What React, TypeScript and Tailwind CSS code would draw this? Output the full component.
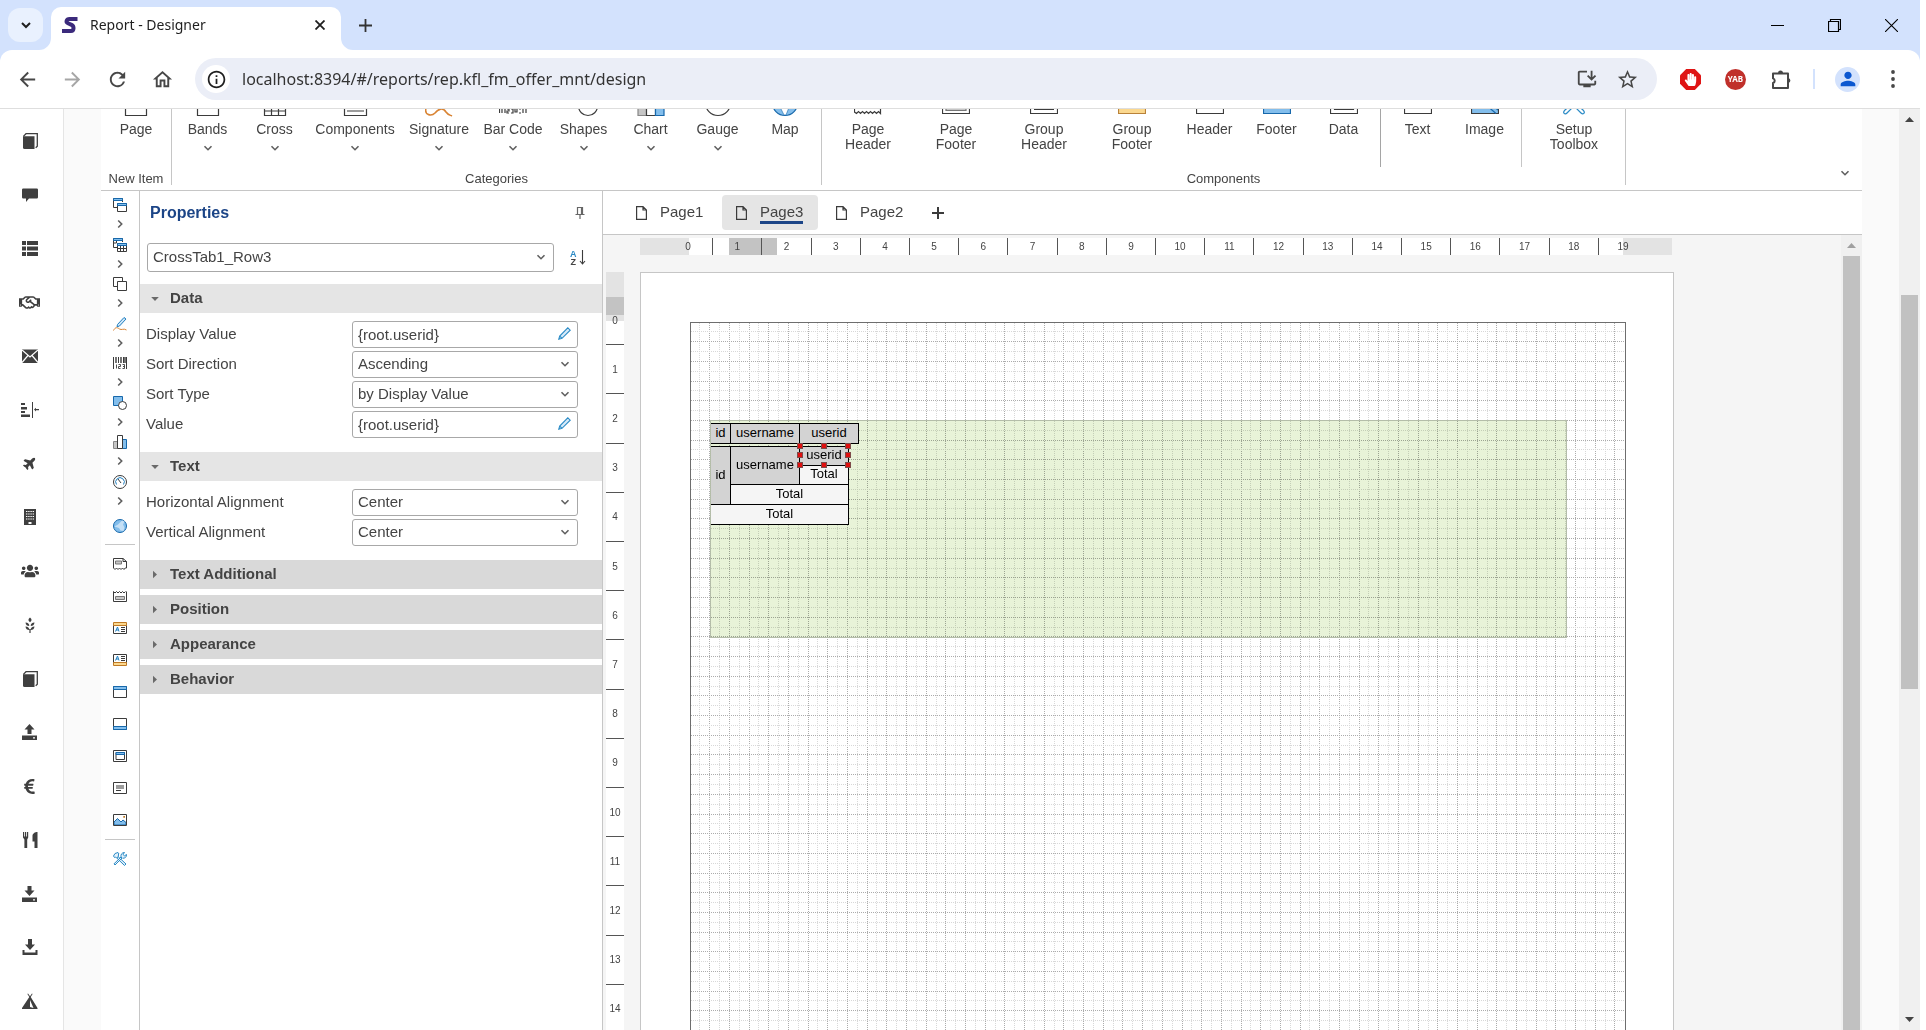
import { useState } from 'react';
import type { ReactNode } from 'react';
import { clsx } from 'clsx';
import { FaEuroSign, FaHandPaper, FaPlane, FaRegHandshake, FaUsers } from 'react-icons/fa';
import { MdInstallDesktop, MdStarBorder, MdPerson, MdRefresh, MdArrowBack, MdArrowForward, MdOutlineHome, MdInfoOutline } from 'react-icons/md';

const CM = 49.2;
const DARK = '#3b3b3b';

/* ---------- small shared glyphs ---------- */

function Chevron({ dir = 'down', className = '' }: { dir?: 'down' | 'right'; className?: string }) {
  return (
    <svg width="10" height="10" viewBox="0 0 10 10" fill="none" stroke="#5f5f5f" strokeWidth="1.6" className={className}>
      {dir === 'down' ? <path d="M1.5 3.2 5 6.7 8.5 3.2" /> : <path d="M3.2 1.5 6.7 5 3.2 8.5" />}
    </svg>
  );
}

function Glyph({ children, size = 16 }: { children: ReactNode; size?: number }) {
  return (
    <svg width={size} height={size} viewBox="0 0 16 16" fill="#3f3f3f">
      {children}
    </svg>
  );
}

/* ---------- app side menu ---------- */

const bookIcon = (
  <Glyph>
    <path d="M1 3.2h11.5V16H2.6A1.6 1.6 0 0 1 1 14.4z" />
    <path d="M1.4 3.4 4 .7h11.3v12.6l-1.6 1.5" fill="none" stroke="#3f3f3f" strokeWidth="1.3" />
  </Glyph>
);

const sideItems: { label: string; icon: ReactNode }[] = [
  { label: 'Catalog', icon: bookIcon },
  {
    label: 'Messages',
    icon: (
      <Glyph>
        <path d="M1.2 1.5h13.6A1.2 1.2 0 0 1 16 2.7v7.6a1.2 1.2 0 0 1-1.2 1.2H7L4 15v-3.5H1.2A1.2 1.2 0 0 1 0 10.3V2.7A1.2 1.2 0 0 1 1.2 1.5z" />
      </Glyph>
    ),
  },
  {
    label: 'Lists',
    icon: (
      <Glyph>
        <path d="M0 1h4v4H0zM5 1h11v4H5zM0 6.500h4v4H0zM5 6.500h11v4H5zM0 12h4v4H0zM5 12h11v4H5z" />
      </Glyph>
    ),
  },
  { label: 'Partners', icon: <FaRegHandshake size={21} color="#3f3f3f" /> },
  {
    label: 'Mail',
    icon: (
      <Glyph>
        <path d="M0 1.500h16v13.500H0z" />
        <path d="m0 2 8 7 8-7M0 14.500 6 7.500M16 14.500l-6-7" fill="none" stroke="#fff" strokeWidth="1.2" />
      </Glyph>
    ),
  },
  {
    label: 'Planning',
    icon: (
      <svg width="18" height="16" viewBox="0 0 18 16" fill="#3f3f3f">
        <path d="M0 1h4v2H0zM0 5h6v2.500H0zM0 9h4v2H0zM0 12.500h9V15H0zM11 0h1v16h-1zM13.500 7H18v1.200h-4.500zM13 7.600l2-1.800v3.600z" />
      </svg>
    ),
  },
  { label: 'Travel', icon: <FaPlane size={14} color="#3f3f3f" className="-rotate-45" /> },
  {
    label: 'Buildings',
    icon: (
      <Glyph>
        <path d="M2 0h12v16H2z" />
        <path d="M4 2.500h8M4 5h8M4 7.500h8M4 10h8" stroke="#fff" strokeWidth="1.2" strokeDasharray="1.400 .8" />
        <path d="M6.500 13h3v2h-3z" fill="#fff" />
      </Glyph>
    ),
  },
  { label: 'Teams', icon: <FaUsers size={18} color="#3f3f3f" /> },
  {
    label: 'Crops',
    icon: (
      <Glyph>
        <path d="M8 .5c2.100 1.600 2.100 3.200 0 4.800-2.100-1.600-2.100-3.200 0-4.800zM7.300 9C5.200 8.900 3.700 7.800 3.500 5.400 6 5.600 7.300 6.700 7.300 9zM8.700 9c2.100-.1 3.600-1.200 3.800-3.600C10 5.600 8.700 6.700 8.700 9zM7.300 13C5.200 12.900 3.700 11.800 3.500 9.400c2.500.2 3.800 1.300 3.800 3.600zM8.700 13c2.100-.1 3.600-1.200 3.800-3.600-2.500.2-3.800 1.300-3.800 3.600zM7.400 12h1.200v4H7.400z" />
      </Glyph>
    ),
  },
  { label: 'Ledger', icon: bookIcon },
  {
    label: 'Export',
    icon: (
      <Glyph>
        <path d="m7.500 0 5 5.500H9.500V10h-4V5.500h-3zM0 11.500h15V16H0z" />
        <path d="M11 13.200h2v1.200h-2z" fill="#fff" />
      </Glyph>
    ),
  },
  { label: 'Currency', icon: <FaEuroSign size={17} color="#3f3f3f" /> },
  {
    label: 'Restaurant',
    icon: (
      <Glyph>
        <path d="M1 0h1.200v4.500H3V0h1.200v4.500H5V0h1.200v5.500L5.200 7.500V16H2.400V7.500L1 5.500zM15.500 0v16h-3V9.500h-2V4c0-2.500 2.500-4 5-4z" />
      </Glyph>
    ),
  },
  {
    label: 'Save',
    icon: (
      <Glyph>
        <path d="M5.500 0h4v4.500h3l-5 5.500-5-5.500h3zM0 11.500h15V16H0z" />
        <path d="M11 13.200h2v1.200h-2z" fill="#fff" />
      </Glyph>
    ),
  },
  {
    label: 'Download',
    icon: (
      <Glyph>
        <path d="M6 0h4v5.500h3L8 11 3 5.500h3zM.500 11H2.500v2.500h11V11h2v5H.500z" />
      </Glyph>
    ),
  },
  {
    label: 'Camp',
    icon: (
      <Glyph>
        <path d="M6 .5 8 3.200 10 .5l.6.5-1.900 3L15.500 15v1H0v-1L7.300 4 5.400 1zM8 7v7l3.500 1z" fillRule="evenodd" />
      </Glyph>
    ),
  },
];

/* ---------- ribbon ---------- */

function BigIcon({ children }: { children: ReactNode }) {
  return (
    <svg width="28" height="28" viewBox="0 0 28 28" fill="none" stroke={DARK} strokeWidth="1.2" className="shrink-0">
      {children}
    </svg>
  );
}

interface RibbonItem {
  label: string;
  width: string;
  menu?: boolean;
  icon: ReactNode;
}

const categories: RibbonItem[] = [
  { label: 'Bands', width: 'w-[67px]', menu: true, icon: <path d="M3.500 1.500h21v25h-21zM3.500 8h21" /> },
  { label: 'Cross', width: 'w-[67px]', menu: true, icon: <path d="M3.500 1.500h21v25h-21zM3.500 8h21M3.500 15h21M3.500 22h21M10.500 8v18.500M17.500 8v18.500" /> },
  { label: 'Components', width: 'w-[94px]', menu: true, icon: <path d="M3.500 1.500h22v25h-22zM6 18h17M6 22h17" /> },
  { label: 'Signature', width: 'w-[74px]', menu: true, icon: <path d="M1 19c-2 8 6 8 9 5 3-4 8-6 11-1 2 3 4 3 6 4" stroke="#d98434" strokeWidth="1.6" /> },
  {
    label: 'Bar Code',
    width: 'w-[74px]',
    menu: true,
    icon: (
      <path d="M.500 2v22M3 2v22M6 2v16M9 2v16M12 2v16M16 2v16M20 2v16M24 2v22M27 2v22M6 20v4M8 20h2v2H8v2h2M12 20h2v4h-2M16 20v3h2v-3M20 20h2M20 24h2" />
    ),
  },
  { label: 'Shapes', width: 'w-[67px]', menu: true, icon: <circle cx="18" cy="17" r="9.500" /> },
  {
    label: 'Chart',
    width: 'w-[67px]',
    menu: true,
    icon: (
      <>
        <path d="M1 14h8.500v12.500H1z" fill="#c6c6c6" stroke="#888" />
        <path d="M9.500 3h9v23.500h-9z" fill="#fff" />
        <path d="M18.500 9H27v17.500h-8.500z" fill="#83beec" stroke="#1768ab" />
      </>
    ),
  },
  { label: 'Gauge', width: 'w-[67px]', menu: true, icon: <circle cx="14" cy="14" r="12.500" /> },
  {
    label: 'Map',
    width: 'w-[68px]',
    icon: (
      <>
        <circle cx="14" cy="14" r="12.500" fill="#83beec" stroke="#1768ab" />
        <path d="M8 16h11l-4 10h-2z" fill="#fff" stroke="#1768ab" strokeWidth=".6" />
      </>
    ),
  },
];

const bandItems: RibbonItem[] = [
  { label: 'Page Header', width: 'w-[88px]', icon: <path d="M.500 2v21l2 1.500 2-2 2 2 2-2 2 2 2-2 2 2 2-2 2 2 2-2 2 2 2-2 2 2V2z" /> },
  {
    label: 'Page Footer',
    width: 'w-[88px]',
    icon: (
      <>
        <path d="M.500 2v22.500h27V2" />
        <path d="M4 14h20v7.500H4z" fill="#c6c6c6" stroke="#777" />
      </>
    ),
  },
  { label: 'Group Header', width: 'w-[88px]', icon: <path d="M.500 2v22.500h27V2zM4 16h20M4 20.500h20" /> },
  { label: 'Group Footer', width: 'w-[88px]', icon: <path d="M.500 13h27v11.500H.500z" fill="#fbd88f" stroke="#b98239" /> },
  { label: 'Header', width: 'w-[67px]', icon: <path d="M.500 2v22.500h27V2z" /> },
  { label: 'Footer', width: 'w-[67px]', icon: <path d="M.500 13h27v11.500H.500z" fill="#83beec" stroke="#1768ab" /> },
  { label: 'Data', width: 'w-[67px]', icon: <path d="M.500 2v22.500h27V2zM4.500 6v14.500h19V6z" /> },
];

const contentItems: RibbonItem[] = [
  { label: 'Text', width: 'w-[67px]', icon: <path d="M.500 2v22.500h27V2z" /> },
  {
    label: 'Image',
    width: 'w-[67px]',
    icon: (
      <>
        <path d="M.500 15h27v9.500H.500z" fill="#83beec" />
        <path d="M14 15l11 9.500M20 15l7 6" stroke="#1768ab" />
      </>
    ),
  },
];

const setupItem: RibbonItem = {
  label: 'Setup Toolbox',
  width: 'w-[98px]',
  icon: <path d="M12 15 5 21c-3 3 0 5 2 3l6-6M16 15l7 6c3 3 0 5-2 3l-6-6" stroke="#2b8bc6" />,
};

function RibbonButton({ item }: { item: RibbonItem }) {
  return (
    <button type="button" className={clsx('flex flex-col items-center', item.width)}>
      <BigIcon>{item.icon}</BigIcon>
      <span className={clsx('mt-[5px] text-sm leading-[15px]', item.menu ? 'whitespace-nowrap' : 'px-3')}>{item.label}</span>
      {item.menu && <Chevron className="mt-1.5" />}
    </button>
  );
}

function RibbonGroup({ title, children }: { title: string; children: ReactNode }) {
  return (
    <div className="flex h-24 flex-col border-r border-[#c6c6c6]">
      <div className="flex h-[78px] items-stretch px-[2px]">{children}</div>
      <div className="mt-auto text-center text-[13px] leading-3">{title}</div>
    </div>
  );
}

function Ribbon() {
  return (
    <div className="flex h-[102px] border-b border-[#c6c6c6]">
      <RibbonGroup title="New Item">
        <RibbonButton item={{ label: 'Page', width: 'w-[66px]', icon: <path d="M3.500 1.500v25h21V8l-6-6.500z" /> }} />
      </RibbonGroup>
      <RibbonGroup title="Categories">
        {categories.map((item) => (
          <RibbonButton key={item.label} item={item} />
        ))}
      </RibbonGroup>
      <RibbonGroup title="Components">
        {bandItems.map((item) => (
          <RibbonButton key={item.label} item={item} />
        ))}
        <span className="mx-[3px] w-px bg-[#a5a5a5]" />
        {contentItems.map((item) => (
          <RibbonButton key={item.label} item={item} />
        ))}
        <span className="mx-[3px] w-px bg-[#c6c6c6]" />
        <RibbonButton item={setupItem} />
      </RibbonGroup>
      <button type="button" aria-label="Collapse ribbon" className="mt-auto mr-3 mb-3 ml-auto">
        <Chevron />
      </button>
    </div>
  );
}

/* ---------- toolbox strip ---------- */

function ToolIcon({ children }: { children: ReactNode }) {
  return (
    <svg width="14" height="14" viewBox="0 0 14 14" fill="none" stroke={DARK} strokeWidth="1" className="shrink-0 overflow-visible">
      {children}
    </svg>
  );
}

const groupTools: { label: string; icon: ReactNode }[] = [
  {
    label: 'Bands',
    icon: (
      <>
        <path d="M4 9.500H.500v-9h9V4" />
        <path d="M.500.500h9v2h-9z" fill="#83beec" stroke="#1768ab" />
        <path d="M4.500 5.500h9v8h-9z" fill="#fff" />
        <path d="M4.500 5.500h9v2h-9z" fill="#83beec" stroke="#1768ab" />
      </>
    ),
  },
  {
    label: 'Cross',
    icon: (
      <>
        <path d="M.500 9.500V.500h9V4M.500 5h3M.500 9.500H4M3.500 3v2" />
        <path d="M.500.500h9v2h-9z" fill="#83beec" stroke="#1768ab" />
        <path d="M4.500 5.500h9v8h-9zM4.500 10.500h9M7.500 7v6.500M10.500 7v6.500" fill="#fff" />
        <path d="M4.500 5.500h9v2h-9z" fill="#83beec" stroke="#1768ab" />
      </>
    ),
  },
  { label: 'Components', icon: <path d="M4 9.500H.500v-9h9V4M4.500 4.500h9v9h-9z" /> },
  {
    label: 'Signature',
    icon: (
      <>
        <path d="M4.500 7.500 11 .500l2 1.500-6.500 7-2.500.800z" fill="#cfe6f8" stroke="#1f7fc0" />
        <path d="M.500 13.500c2-4 4-3 6-1.500s4-1 7 1" stroke="#d98434" />
      </>
    ),
  },
  {
    label: 'Bar Code',
    icon: (
      <>
        <path d="M.500 1v12M13.500 1v12M5.500 1v6M10.500 1v6" />
        <path d="M3 1v6M8 1v6M12 1v6" strokeWidth="1.400" />
        <path d="M3.500 8.500v4M5.500 8.500h2v2h-2v2h2M9.500 8.500h2v4h-2M10 10.500h1.500" strokeWidth=".9" />
      </>
    ),
  },
  {
    label: 'Shapes',
    icon: (
      <>
        <path d="M.500.500h9v9h-9z" fill="#83beec" stroke="#1768ab" />
        <circle cx="9.500" cy="9.500" r="4" fill="#fff" />
      </>
    ),
  },
  {
    label: 'Chart',
    icon: (
      <>
        <path d="M.500 6.500h4v7h-4z" fill="#c6c6c6" stroke="#888" />
        <path d="M9.500 4.500h4v9h-4z" fill="#83beec" stroke="#1768ab" />
        <path d="M4.500.500h5v13h-5z" fill="#fff" />
      </>
    ),
  },
  {
    label: 'Gauge',
    icon: (
      <>
        <circle cx="7" cy="7" r="6.500" />
        <path d="M3.500 9.500a4.300 4.300 0 1 1 7 0" stroke="#1f7fc0" />
        <path d="M8 8 5 4" />
      </>
    ),
  },
];

const bandTools: { label: string; icon: ReactNode }[] = [
  {
    label: 'Page Header',
    icon: (
      <>
        <path d="M.500 11V1.500h9.500l3.500 3V11M.500 11l1.500 1.500L3.500 11 5 12.500 6.500 11 8 12.500 9.500 11l1.500 1.500 1.200-1.500h1.300M10 1.500v3h3.500" />
        <path d="M2.500 4h6v3h-6z" fill="#c6c6c6" stroke="#777" />
      </>
    ),
  },
  {
    label: 'Page Footer',
    icon: (
      <>
        <path d="M.500 2.500v10h13v-10M.500 2.500 2 4l1.500-1.500L5 4l1.500-1.500L8 4l1.500-1.500L11 4l1.500-1.500" />
        <path d="M2.500 7.500h9v3h-9z" fill="#c6c6c6" stroke="#777" />
      </>
    ),
  },
  {
    label: 'Group Header',
    icon: (
      <>
        <path d="M.500 4v8.500h13V4M8 6.500h4M8 8.500h4M8 10.500h4" />
        <path d="M2.500 10.500 4.500 6l1.500 4.500M3 9h2.500" stroke="#1f7fc0" />
        <path d="M.500 1.500h13v3h-13z" fill="#fbd88f" stroke="#c07a24" />
      </>
    ),
  },
  {
    label: 'Group Footer',
    icon: (
      <>
        <path d="M.500 10V1.500h13V10M8 3.500h4M8 5.500h4M8 7.500h4" />
        <path d="M2.500 7.500 4.500 3 6 7.500M3 6h2.500" stroke="#1f7fc0" />
        <path d="M.500 9.500h13v3h-13z" fill="#fbd88f" stroke="#c07a24" />
      </>
    ),
  },
  {
    label: 'Header',
    icon: (
      <>
        <path d="M.500 1.500h13v11h-13z" />
        <path d="M.500 1.500h13v3h-13z" fill="#83beec" stroke="#1768ab" />
      </>
    ),
  },
  {
    label: 'Footer',
    icon: (
      <>
        <path d="M.500 1.500h13v11h-13z" />
        <path d="M.500 9.500h13v3h-13z" fill="#83beec" stroke="#1768ab" />
      </>
    ),
  },
  {
    label: 'Data',
    icon: (
      <>
        <path d="M.500 1.500h13v11h-13zM3 3.500h8.500v7H3z" />
        <path d="M3 3.500h8.500v2H3z" fill="#83beec" stroke="#1768ab" />
      </>
    ),
  },
  { label: 'Text', icon: <path d="M.500 1.500h13v11h-13zM3 5h8M3 7h8M3 9.500h5" /> },
  {
    label: 'Image',
    icon: (
      <>
        <path d="M1 9 4.500 5.500 8 9l2-2 3 2.500V12H1z" fill="#83beec" stroke="#1768ab" />
        <path d="M10.300 3h1.700v1.700h-1.700z" fill="#c07a24" stroke="none" />
        <path d="M.500 1.500h13v11h-13z" />
      </>
    ),
  },
];

function Toolbox() {
  return (
    <div className="flex w-[39px] shrink-0 flex-col items-center border-r border-[#c6c6c6] pt-1">
      <div className="flex h-[316px] flex-col">
        {groupTools.map((tool) => (
          <button key={tool.label} type="button" aria-label={tool.label} className="flex flex-1 flex-col items-center gap-[7px] pt-[3px]">
            <ToolIcon>{tool.icon}</ToolIcon>
            <Chevron dir="right" />
          </button>
        ))}
      </div>
      <button type="button" aria-label="Map" className="flex h-[30px] items-center">
        <ToolIcon>
          <circle cx="7" cy="7" r="6.500" fill="#83beec" stroke="#1768ab" />
          <path d="M1.500 7.500 5 5.500l4-4 2.500 1-1.500 3 1.500 3-1 3.500-3-.5L6 9z" fill="#c5e0f6" stroke="none" />
        </ToolIcon>
      </button>
      <hr className="my-[3px] w-[30px] border-[#c6c6c6]" />
      {bandTools.map((tool) => (
        <button key={tool.label} type="button" aria-label={tool.label} className="flex h-8 items-center">
          <ToolIcon>{tool.icon}</ToolIcon>
        </button>
      ))}
      <hr className="my-[3px] w-[30px] border-[#c6c6c6]" />
      <button type="button" aria-label="Setup Toolbox" className="flex h-8 items-center">
        <ToolIcon>
          <path d="m5 4.500 8 7.500-1.500 1.500L3.800 6z" stroke="#2b8bc6" fill="#e3f1fb" />
          <path d="M9 6 2 13l-1-1.200L8 5zM8 5c-.5-2.500 1-4.500 3.500-4.500L10 2.500l1.500 1.300 2-1.300c.2 2.500-1.500 4-4 3.700" stroke="#2b8bc6" fill="#e3f1fb" />
          <path d="M.500 4 2 1.500 5 .500l1 1.500L5 3l.8 1L3.500 6 2.500 5 1.500 5.500z" stroke="#2b8bc6" fill="#e3f1fb" />
        </ToolIcon>
      </button>
    </div>
  );
}

/* ---------- properties ---------- */

const fieldBox = 'h-[27px] w-full rounded-[3px] border border-[#a8a8a8] bg-white pl-[5px] text-[15px] text-[#444] outline-none focus:border-[#1c4587]';

function SelectRow({ id, label, value, options }: { id: string; label: string; value: string; options: string[] }) {
  return (
    <div className="flex items-center">
      <label htmlFor={id} className="w-[206px]">{label}</label>
      <div className="relative w-[226px]">
        <select id={id} defaultValue={value} className={clsx(fieldBox, 'block appearance-none')}>
          {options.map((o) => (
            <option key={o}>{o}</option>
          ))}
        </select>
        <Chevron className="pointer-events-none absolute top-2 right-2" />
      </div>
    </div>
  );
}

function ExpressionRow({ id, label, value }: { id: string; label: string; value: string }) {
  return (
    <div className="flex items-center">
      <label htmlFor={id} className="w-[206px]">{label}</label>
      <div className="relative w-[226px]">
        <input id={id} defaultValue={value} className={clsx(fieldBox, 'block')} />
        <button type="button" aria-label={`Edit ${label}`} className="absolute top-1.5 right-[7px]">
          <svg width="13" height="13" viewBox="0 0 13 13" fill="#d9ebf9" stroke="#2b8bc6" strokeWidth="1.100">
            <path d="m.8 12.200.9-3.200L9.800.8l2.400 2.400L4 11.300zM1.700 9 4 11.300" />
          </svg>
        </button>
      </div>
    </div>
  );
}

function Section({ title, open = false, children }: { title: string; open?: boolean; children?: ReactNode }) {
  const [expanded, setExpanded] = useState(open);
  return (
    <section>
      <button
        type="button"
        onClick={() => setExpanded(!expanded)}
        className={clsx('flex h-[29px] w-full items-center pl-2.5 text-[15px] font-bold', expanded ? 'bg-[#e5e5e5]' : 'bg-[#d9d9d9]')}
      >
        <svg width="10" height="10" viewBox="0 0 10 10" fill="#6a6a6a" className="mr-2.5">
          {expanded ? <path d="M1.200 3h7.600L5 7z" /> : <path d="M3 .8v7.400L7 4.500z" />}
        </svg>
        {title}
      </button>
      {expanded && children ? <div className="flex flex-col gap-[3px] pt-2 pb-3.5 pl-1.5">{children}</div> : !expanded && <div className="h-1.5" />}
    </section>
  );
}

function Properties() {
  return (
    <aside className="w-[463px] shrink-0 border-r border-[#c6c6c6] text-[15px] text-[#444]">
      <div className="flex h-11 items-center justify-between pr-[17px] pl-2.5">
        <h2 className="text-base font-bold text-[#1c4587]">Properties</h2>
        <button type="button" aria-label="Pin panel">
          <svg width="10" height="14" viewBox="0 0 10 14" fill="none" stroke="#666" strokeWidth="1.200">
            <path d="M2.500 8V1.500h5V8M.500 8.500h9M5 8.500V13M6.500 2v6" />
          </svg>
        </button>
      </div>
      <div className="flex items-center pt-2 pb-3 pl-[7px]">
        <div className="relative w-[407px]">
          <select aria-label="Component" defaultValue="CrossTab1_Row3" className="block h-[29px] w-full appearance-none rounded-[3px] border border-[#a8a8a8] pl-[5px]">
            <option>CrossTab1_Row3</option>
            <option>CrossTab1_Row2</option>
            <option>CrossTab1_Row1</option>
          </select>
          <Chevron className="pointer-events-none absolute top-[9px] right-2" />
        </div>
        <button type="button" aria-label="Sort properties" className="ml-4 flex items-center">
          <span className="flex flex-col text-[9px] leading-2 font-bold">
            <span className="text-[#2b8bc6]">A</span>
            <span>Z</span>
          </span>
          <svg width="7" height="15" viewBox="0 0 7 15" fill="none" stroke={DARK} strokeWidth="1.100" className="ml-0.5">
            <path d="M3.500 0v14M1 11l2.500 3L6 11" />
          </svg>
        </button>
      </div>
      <Section title="Data" open>
        <ExpressionRow id="display-value" label="Display Value" value="{root.userid}" />
        <SelectRow id="sort-direction" label="Sort Direction" value="Ascending" options={['Ascending', 'Descending', 'None']} />
        <SelectRow id="sort-type" label="Sort Type" value="by Display Value" options={['by Value', 'by Display Value']} />
        <ExpressionRow id="value" label="Value" value="{root.userid}" />
      </Section>
      <Section title="Text" open>
        <SelectRow id="h-align" label="Horizontal Alignment" value="Center" options={['Left', 'Center', 'Right']} />
        <SelectRow id="v-align" label="Vertical Alignment" value="Center" options={['Top', 'Center', 'Bottom']} />
      </Section>
      <Section title="Text Additional" />
      <Section title="Position" />
      <Section title="Appearance" />
      <Section title="Behavior" />
    </aside>
  );
}

/* ---------- design surface ---------- */

function PageTabs() {
  const [active, setActive] = useState('Page3');
  return (
    <div className="flex h-11 gap-1 border-b border-[#c6c6c6] pt-1 pl-[19px] text-[15px] text-[#444]">
      {['Page1', 'Page3', 'Page2'].map((name) => (
        <button
          key={name}
          type="button"
          onClick={() => setActive(name)}
          className={clsx('flex h-[35px] w-24 items-center rounded pl-3.5', active === name && 'bg-[#e5e5e5]')}
        >
          <svg width="11" height="14" viewBox="0 0 11 14" fill="none" stroke={DARK} strokeWidth="1.200" className="mr-[13px] shrink-0">
            <path d="M.600.600v12.800h9.800V4L7 .600zM7 .600V4h3.400" />
          </svg>
          <span className={clsx('border-b-3 leading-[19px]', active === name ? 'border-[#1c4587]' : 'border-transparent')}>{name}</span>
        </button>
      ))}
      <button type="button" aria-label="Add page" className="ml-2.5 h-[35px]">
        <svg width="12" height="12" viewBox="0 0 12 12" stroke={DARK} strokeWidth="2">
          <path d="M6 0v12M0 6h12" />
        </svg>
      </button>
    </div>
  );
}

function HorizontalRuler() {
  return (
    <div className="relative ml-[37px] flex h-[17px] w-[1032px] bg-white pr-[25px] pl-6 text-[10px] text-[#444]">
      <span className="absolute inset-y-0 left-0 w-[49px] bg-[#e3e3e3]" />
      <span className="absolute inset-y-0 right-0 w-[49px] bg-[#e3e3e3]" />
      <span className="absolute inset-y-0 left-[89px] w-12 bg-[#c3c3c3]" />
      {Array.from({ length: 20 }, (_, i) => (
        <span key={i} className={clsx('relative flex-1 text-center leading-[17px]', i < 19 && 'border-r border-[#555]')}>
          {i}
        </span>
      ))}
    </div>
  );
}

function VerticalRuler() {
  return (
    <div className="relative w-[18px] shrink-0 bg-white pt-6 text-[10px] text-[#444]">
      <span className="absolute inset-x-0 top-0 h-[49px] bg-[#e3e3e3]" />
      <span className="absolute inset-x-0 top-[25px] h-[18px] bg-[#c3c3c3]" />
      <div className="relative flex h-[738px] flex-col">
        {Array.from({ length: 15 }, (_, i) => (
          <span key={i} className="flex flex-1 items-center justify-center border-b border-[#555]">
            {i}
          </span>
        ))}
      </div>
    </div>
  );
}

function GridLines() {
  const cols = Array.from({ length: 94 }, (_, i) => i + 1);
  const rows = Array.from({ length: 74 }, (_, i) => i + 1);
  const at = (i: number) => Math.floor((i * CM) / 5 - 1) + 0.5;
  return (
    <svg width="100%" height="100%" className="absolute inset-0" shapeRendering="crispEdges" strokeDasharray="1 1">
      {cols.map((i) => (
        <path key={`c${i}`} d={`M${at(i)} 0V740`} stroke={i % 2 ? '#d8d8d8' : '#acacac'} />
      ))}
      {rows.map((i) => (
        <path key={`r${i}`} d={`M0 ${at(i)}H934`} stroke={i % 2 ? '#d8d8d8' : '#acacac'} />
      ))}
    </svg>
  );
}

const cell = 'border-r border-b border-black p-0 pb-0.5 text-center font-normal';

const handles = [
  'top-[-3px] left-[86px]',
  'top-[-3px] left-[110px]',
  'top-[-3px] left-[134px]',
  'top-[6px] left-[86px]',
  'top-[6px] left-[134px]',
  'top-[16px] left-[86px]',
  'top-[16px] left-[110px]',
  'top-[16px] left-[134px]',
];

function CrossTab() {
  return (
    <div className="absolute top-[97px] left-[19px] h-[218px] w-[857px] border border-[#b4bda9] text-[13px] leading-4 text-black">
      <span className="absolute inset-0 bg-[#e8f3d8] mix-blend-multiply" />
      <table className="absolute top-0.5 left-0 w-[148px] table-fixed border-separate border-spacing-0 border-t border-black">
        <tbody>
          <tr className="h-5 bg-[#d3d3d3]">
            <th className={clsx(cell, 'w-5')}>id</th>
            <th className={clsx(cell, 'w-[69px]')}>username</th>
            <th className={cell}>userid</th>
          </tr>
        </tbody>
      </table>
      <div className="absolute top-[25px] left-0 w-[138px]">
        <table className="w-full table-fixed border-separate border-spacing-0 border-t border-black">
          <colgroup>
            <col className="w-5" />
            <col className="w-[69px]" />
            <col />
          </colgroup>
          <tbody>
            <tr className="h-[19px] bg-[#d3d3d3]">
              <td rowSpan={3} className={cell}>id</td>
              <td rowSpan={2} className={cell}>username</td>
              <td className={cell}>userid</td>
            </tr>
            <tr className="h-[19px]">
              <td className={clsx(cell, 'bg-[#f5f5f5]')}>Total</td>
            </tr>
            <tr className="h-5">
              <td colSpan={2} className={clsx(cell, 'bg-[#f5f5f5]')}>Total</td>
            </tr>
            <tr className="h-5">
              <td colSpan={3} className={clsx(cell, 'bg-[#f5f5f5]')}>Total</td>
            </tr>
          </tbody>
        </table>
        {handles.map((pos) => (
          <span key={pos} className={clsx('absolute size-1.5 border border-[#7d4a4a] bg-[#e01010]', pos)} />
        ))}
      </div>
    </div>
  );
}

function ScrollArrow({ dir, color }: { dir: 'up' | 'down'; color: string }) {
  return (
    <svg width="9" height="5" viewBox="0 0 9 5" fill={color}>
      {dir === 'up' ? <path d="M0 5 4.500 0 9 5z" /> : <path d="M0 0 4.500 5 9 0z" />}
    </svg>
  );
}

function DesignSurface() {
  return (
    <main className="flex min-w-0 flex-1 flex-col">
      <PageTabs />
      <div className="flex min-h-0 flex-1 bg-[#f5f5f5]">
        <div className="flex min-w-0 flex-1 flex-col overflow-hidden pt-[3px]">
          <HorizontalRuler />
          <div className="mt-[17px] flex min-h-0 flex-1 gap-4 pl-[3px]">
            <VerticalRuler />
            <div className="w-[1034px] shrink-0 border border-b-0 border-[#c6c6c6] bg-white pt-[49px] pr-[47px] pl-[49px]">
              <div className="relative h-full overflow-hidden border border-b-0 border-[#6e6e6e]">
                <GridLines />
                <CrossTab />
              </div>
            </div>
          </div>
        </div>
        <div className="flex w-[21px] shrink-0 flex-col items-center bg-[#f0f0f0]">
          <div className="flex h-[21px] items-center">
            <ScrollArrow dir="up" color="#a0a0a0" />
          </div>
          <div className="w-[17px] flex-1 bg-[#c1c1c1]" />
        </div>
      </div>
    </main>
  );
}

/* ---------- browser window ---------- */

function TitleBar() {
  return (
    <div className="flex h-[50px] shrink-0 items-stretch bg-[#d3e2fd] pl-2">
      <button type="button" aria-label="Search tabs" className="mt-2 flex h-[34px] w-[35px] items-center justify-center rounded-xl bg-[#e9f1fe]">
        <svg width="10" height="10" viewBox="0 0 10 10" fill="none" stroke="#1f1f1f" strokeWidth="2">
          <path d="M1 3l4 4 4-4" />
        </svg>
      </button>
      <div className="relative mt-[7px] ml-2 flex w-[290px] items-center rounded-t-[10px] bg-white pr-4 pb-2 pl-[11px]">
        <svg width="12" height="12" viewBox="0 0 12 12" fill="#fff" className="absolute bottom-0 -left-3">
          <path d="M12 0v12H0A12 12 0 0 0 12 0z" />
        </svg>
        <svg width="12" height="12" viewBox="0 0 12 12" fill="#fff" className="absolute -right-3 bottom-0">
          <path d="M0 0v12h12A12 12 0 0 1 0 0z" />
        </svg>
        <svg width="16" height="16" viewBox="0 0 16 16" fill="none" stroke="#3b2a7c" strokeWidth="4">
          <path d="M15.500 2H7.500C4.500 2 3.500 5 6 6.300l3.500 1.500C12.500 9.500 12 14 9 14H0" />
        </svg>
        <span className="ml-3 flex-1 text-sm text-[#1f1f1f]">Report - Designer</span>
        <button type="button" aria-label="Close tab">
          <svg width="10" height="10" viewBox="0 0 10 10" stroke="#1f1f1f" strokeWidth="1.800">
            <path d="m.5.5 9 9M9.500.5l-9 9" />
          </svg>
        </button>
      </div>
      <button type="button" aria-label="New tab" className="ml-[18px]">
        <svg width="13" height="13" viewBox="0 0 13 13" stroke="#333" strokeWidth="1.800">
          <path d="M6.500 0v13M0 6.500h13" />
        </svg>
      </button>
      <div className="mr-[22px] ml-auto flex items-center gap-[44px]">
        <button type="button" aria-label="Minimize">
          <svg width="13" height="13" viewBox="0 0 13 13" stroke="#000">
            <path d="M0 6.500h13" />
          </svg>
        </button>
        <button type="button" aria-label="Restore">
          <svg width="13" height="13" viewBox="0 0 13 13" fill="none" stroke="#000" strokeWidth="1.200">
            <path d="M.500 2.500h10v10h-10zM2.500 2.500v-2h10v10h-2" />
          </svg>
        </button>
        <button type="button" aria-label="Close window">
          <svg width="13" height="13" viewBox="0 0 13 13" stroke="#000" strokeWidth="1.100">
            <path d="m0 0 13 13M13 0 0 13" />
          </svg>
        </button>
      </div>
    </div>
  );
}

function AddressBar() {
  return (
    <div className="shrink-0 bg-[#d3e2fd]">
      <div className="flex h-[59px] items-center rounded-t-xl border-b border-[#dedede] bg-white pl-4 text-[#474747]">
        <div className="flex items-center gap-[22px]">
          <button type="button" aria-label="Back"><MdArrowBack size={23} /></button>
          <button type="button" aria-label="Forward" className="text-[#a6a6a6]"><MdArrowForward size={23} /></button>
          <button type="button" aria-label="Reload"><MdRefresh size={23} /></button>
          <button type="button" aria-label="Home"><MdOutlineHome size={23} /></button>
        </div>
        <div className="ml-[21px] flex h-[42px] flex-1 items-center rounded-full bg-[#ebeef7] pr-[18px] pl-[7px]">
          <span className="flex size-7 items-center justify-center rounded-full bg-white text-[#1f1f1f]">
            <MdInfoOutline size={21} />
          </span>
          <input
            aria-label="Address"
            defaultValue="localhost:8394/#/reports/rep.kfl_fm_offer_mnt/design"
            className="ml-3 flex-1 bg-transparent text-base text-[#333] outline-none"
          />
          <button type="button" aria-label="Install app" className="mr-[18px]"><MdInstallDesktop size={22} /></button>
          <button type="button" aria-label="Bookmark"><MdStarBorder size={23} /></button>
        </div>
        <div className="flex items-center pr-[25px] pl-[23px]">
          <button type="button" aria-label="Ad blocker" className="relative flex size-[21px] items-center justify-center">
            <svg width="21" height="21" viewBox="0 0 21 21" fill="#df1414" className="absolute inset-0">
              <path d="M6.200 0h8.600L21 6.200v8.600L14.800 21H6.200L0 14.800V6.200z" />
            </svg>
            <FaHandPaper size={13} color="#fff" className="relative" />
          </button>
          <button type="button" aria-label="YAB" className="ml-6 flex size-[21px] items-center justify-center rounded-full bg-[#c0302b] text-[8px] font-bold text-white">
            YAB
          </button>
          <button type="button" aria-label="Extensions" className="ml-[25px]">
            <svg width="21" height="21" viewBox="0 0 21 21" fill="#474747">
              <path
                d="M2 4.500h15v14.500H2V14a2.400 2.400 0 0 0 0-4.600z"
                fill="none"
                stroke="#474747"
                strokeWidth="2"
                strokeLinejoin="round"
              />
              <path d="M7 4a2.500 2.500 0 0 1 5 0zM17.500 9a2.600 2.600 0 0 1 0 5z" />
            </svg>
          </button>
          <span className="ml-[21px] h-5 w-0.5 bg-[#d3e2fd]" />
          <button type="button" aria-label="Profile" className="ml-5 flex size-[25px] items-center justify-center rounded-full bg-[#d3e2fd] text-[#0b57d0]">
            <MdPerson size={22} />
          </button>
          <button type="button" aria-label="Menu" className="ml-[31px]">
            <svg width="4" height="18" viewBox="0 0 4 18" fill="#474747">
              <circle cx="2" cy="2" r="1.900" />
              <circle cx="2" cy="9" r="1.900" />
              <circle cx="2" cy="16" r="1.900" />
            </svg>
          </button>
        </div>
      </div>
    </div>
  );
}

export default function App() {
  return (
    <div className="h-screen overflow-hidden bg-white pr-1.5">
      <div className="flex h-full flex-col">
        <div className="font-['Noto_Sans',sans-serif]">
          <TitleBar />
          <AddressBar />
        </div>
        <div className="flex min-h-0 flex-1 overflow-hidden bg-[#fafafa] font-['Liberation_Sans',sans-serif] text-[#444]">
          <nav className="w-16 shrink-0 border-r border-[#e5e5e5] bg-white pt-[5px]">
            <ul className="flex h-[914px] flex-col pr-1">
              {sideItems.map((item, i) => (
                <li key={i} className="flex flex-1 items-center justify-center">
                  <a href="#" aria-label={item.label}>{item.icon}</a>
                </li>
              ))}
            </ul>
          </nav>
          <div className="mx-[37px] flex min-w-0 flex-1 flex-col overflow-hidden bg-white">
            <div className="-mt-5 flex min-h-0 flex-1 flex-col">
              <Ribbon />
              <div className="flex min-h-0 flex-1">
                <Toolbox />
                <Properties />
                <DesignSurface />
              </div>
            </div>
          </div>
          <div className="flex w-[21px] shrink-0 flex-col items-center bg-[#f0f0f0] py-2">
            <ScrollArrow dir="up" color="#444" />
            <div className="mt-[173px] h-[394px] w-[17px] bg-[#c1c1c1]" />
            <div className="mt-auto">
              <ScrollArrow dir="down" color="#444" />
            </div>
          </div>
        </div>
      </div>
    </div>
  );
}
